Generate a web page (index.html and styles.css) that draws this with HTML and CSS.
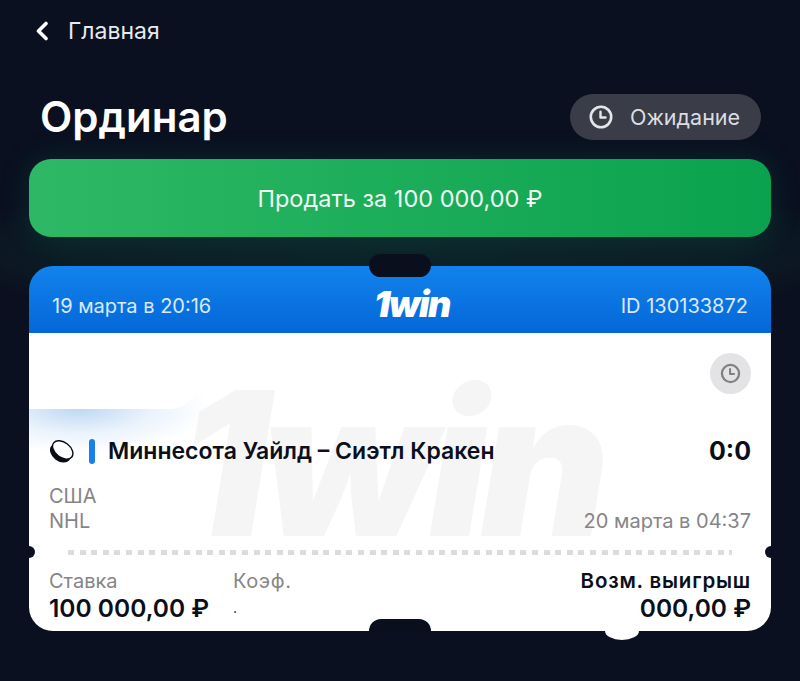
FILE: index.html
```html
<!DOCTYPE html>
<html lang="ru">
<head>
    <meta charset="UTF-8">
    <meta name="viewport" content="width=device-width, initial-scale=1.0">
    <title>Ординар</title>
    <link rel="stylesheet" href="styles.css">
</head>
<body>
    <div class="page">
        <nav class="nav">
            <svg class="nav-back" width="14" height="20" viewBox="0 0 14 20"><path d="M11 2.5 3.5 10l7.500 7.500" fill="none" stroke="#fff" stroke-width="3.600" stroke-linecap="round" stroke-linejoin="round"/></svg>
            <span>Главная</span>
        </nav>

        <header class="title-row">
            <h1>Ординар</h1>
            <div class="status">
                <svg width="24" height="24" viewBox="0 0 24 24"><circle cx="12" cy="12" r="10.200" fill="none" stroke="#e6e6ea" stroke-width="2.600"/><path d="M11.500 6.800v5.700h5" fill="none" stroke="#e6e6ea" stroke-width="2.400" stroke-linecap="round" stroke-linejoin="round"/></svg>
                <span>Ожидание</span>
            </div>
        </header>

        <button class="sell">Продать за 100 000,00 ₽</button>

        <section class="ticket">
            <div class="ticket-head">
                <span>19 марта в 20:16</span>
                <span class="logo">1win</span>
                <span>ID 130133872</span>
            </div>
            <div class="ticket-body">
                <div class="watermark">1win</div>
                <div class="smudge"></div>
                <div class="scribble"></div>

                <div class="status-row">
                    <div class="status-dot">
                        <svg width="21" height="21" viewBox="0 0 24 24"><circle cx="12" cy="12" r="9.800" fill="none" stroke="#808084" stroke-width="2.600"/><path d="M11.500 7v5.500h4.500" fill="none" stroke="#808084" stroke-width="2.400" stroke-linecap="round" stroke-linejoin="round"/></svg>
                    </div>
                </div>

                <div class="match">
                    <svg class="puck" width="25" height="25" viewBox="0 0 25 25"><g transform="rotate(38 12.500 12.500)"><ellipse cx="12.500" cy="14.500" rx="11.500" ry="8" fill="#0a0c14"/><ellipse cx="12.500" cy="10.500" rx="11.500" ry="7.500" fill="#fff" stroke="#0a0c14" stroke-width="1.400"/></g></svg>
                    <i class="match-bar"></i>
                    <span class="match-name">Миннесота Уайлд – Сиэтл Кракен</span>
                    <span class="match-score">0:0</span>
                </div>

                <div class="meta">
                    <div>США<br>NHL</div>
                    <div>20 марта в 04:37</div>
                </div>

                <div class="dashes"></div>

                <div class="foot">
                    <div class="foot-stake">
                        <div class="foot-label">Ставка</div>
                        <div class="foot-value">100 000,00 ₽</div>
                    </div>
                    <div class="foot-coef">
                        <div class="foot-label">Коэф.</div>
                        <div class="foot-dot">.</div>
                    </div>
                    <div class="foot-win">
                        <div class="foot-win-label">Возм. выигрыш</div>
                        <div class="foot-value">000,00 ₽</div>
                    </div>
                </div>
            </div>
            <i class="notch notch-top"></i>
            <i class="notch notch-bottom"></i>
            <i class="hole hole-left"></i>
            <i class="hole hole-right"></i>
            <i class="bump"></i>
        </section>
    </div>
</body>
</html>
```

FILE: styles.css
```css
* {
    box-sizing: border-box;
}
html, body {
    margin: 0;
    height: 100%;
}
body {
    background: #0a101f;
    font-family: Inter, "Noto Sans", sans-serif;
    overflow: hidden;
}
.page {
    height: 681px;
    padding: 0 29px;
    background: radial-gradient(ellipse 470px 75px at 400px 250px, #0d2429 0%, rgba(13,36,41,0.7) 70%, rgba(10,16,31,0) 100%);
}
.nav {
    display: flex;
    align-items: center;
    gap: 19px;
    height: 62px;
    padding-left: 6px;
    color: #e8e9ec;
    font-size: 23px;
}
.title-row {
    display: flex;
    justify-content: space-between;
    align-items: center;
    height: 46px;
    margin: 32px 10px 19px 11px;
}
h1 {
    margin: 0;
    color: #fff;
    font-size: 42px;
    font-weight: 600;
    line-height: 46px;
}
.status {
    display: flex;
    align-items: center;
    gap: 17px;
    width: 191px;
    height: 46px;
    padding-left: 19px;
    border-radius: 23px;
    background: #3a3c48;
    color: #dcdde1;
    font-size: 21.500px;
}
.sell {
    display: block;
    width: 100%;
    height: 78px;
    border: 0;
    border-radius: 22px;
    background: linear-gradient(90deg, #2eb865 0%, #0aa24e 100%);
    box-shadow: 0 0 28px rgba(16,110,90,0.28);
    color: #eefaf2;
    font-family: inherit;
    font-size: 23.500px;
}
.ticket {
    position: relative;
    margin-top: 29px;
    height: 365px;
}
.ticket-head {
    display: flex;
    justify-content: space-between;
    align-items: center;
    height: 67px;
    padding: 13px 23px 0;
    border-radius: 24px 24px 0 0;
    background: linear-gradient(180deg, #1283ec 0%, #0467d8 100%);
    color: #dbe9fb;
    font-size: 20px;
}
.logo {
    color: #fff;
    font-size: 36px;
    font-weight: 900;
    font-style: italic;
    letter-spacing: -1.500px;
    line-height: 36px;
    margin: -4px 0 0 -8px;
}
.ticket-body {
    position: relative;
    height: 298px;
    padding: 0 20px;
    border-radius: 0 0 24px 24px;
    background: #fff;
    overflow: hidden;
}
.watermark {
    position: absolute;
    left: 150px;
    top: 30px;
    color: #f5f5f6;
    font-size: 200px;
    font-weight: 900;
    font-style: italic;
    letter-spacing: -8px;
    line-height: 200px;
}
.smudge {
    position: absolute;
    left: 0;
    top: 60px;
    width: 200px;
    height: 70px;
    background: radial-gradient(ellipse 130px 45px at 50px 15px, #bcd7f3 0%, rgba(220,234,250,0.6) 55%, rgba(255,255,255,0) 100%);
}
.scribble {
    position: absolute;
    left: 0;
    top: 12px;
    width: 170px;
    height: 64px;
    border-radius: 0 30px 30px 0;
    background: #fff;
}
.status-row {
    position: relative;
    display: flex;
    justify-content: flex-end;
    height: 86px;
    padding-top: 20px;
}
.status-dot {
    display: flex;
    align-items: center;
    justify-content: center;
    width: 41px;
    height: 41px;
    border-radius: 50%;
    background: #e3e3e5;
}
.match {
    position: relative;
    display: flex;
    align-items: center;
    height: 30px;
    margin-top: 17px;
    color: #0b0f1c;
}
.puck {
    margin-right: 15px;
    flex: none;
}
.match-bar {
    width: 6px;
    height: 25px;
    margin-right: 13px;
    border-radius: 3px;
    background: #1a7fe8;
}
.match-name {
    flex: 1;
    font-size: 23px;
    font-weight: 600;
}
.match-score {
    font-size: 25px;
    font-weight: 700;
}
.meta {
    position: relative;
    display: flex;
    justify-content: space-between;
    align-items: flex-end;
    margin-top: 18px;
    color: #858588;
    font-size: 20px;
    line-height: 25px;
}
.dashes {
    position: relative;
    height: 5px;
    margin: 16px 19px 0;
    background: repeating-linear-gradient(90deg, #dcdcde 0, #dcdcde 6px, transparent 6px, transparent 11.600px);
}
.foot {
    position: relative;
    display: flex;
    margin-top: 13px;
    color: #0b0f1c;
}
.foot-stake {
    width: 184px;
}
.foot-coef {
    flex: 1;
}
.foot-win {
    text-align: right;
}
.foot-label {
    color: #858588;
    font-size: 20px;
    line-height: 26px;
}
.foot-coef .foot-label {
    letter-spacing: 0.600px;
}
.foot-win-label {
    font-size: 20.500px;
    font-weight: 600;
    letter-spacing: 0.800px;
    line-height: 26px;
}
.foot-value {
    font-size: 24.500px;
    font-weight: 600;
    line-height: 28px;
}
.foot-dot {
    font-size: 14px;
    line-height: 28px;
}
.notch {
    position: absolute;
    left: 340px;
    width: 62px;
    background: #0a0f1e;
}
.notch-top {
    top: -12px;
    height: 23px;
    border-radius: 12px;
}
.notch-bottom {
    bottom: 0;
    height: 12px;
    border-radius: 12px 12px 0 0;
}
.hole {
    position: absolute;
    top: 280px;
    width: 12px;
    height: 12px;
    border-radius: 50%;
    background: #0a101f;
}
.hole-left {
    left: -6px;
}
.hole-right {
    right: -6px;
}
.bump {
    position: absolute;
    left: 576px;
    bottom: -9px;
    width: 34px;
    height: 18px;
    border-radius: 50%;
    background: #fff;
}
```
